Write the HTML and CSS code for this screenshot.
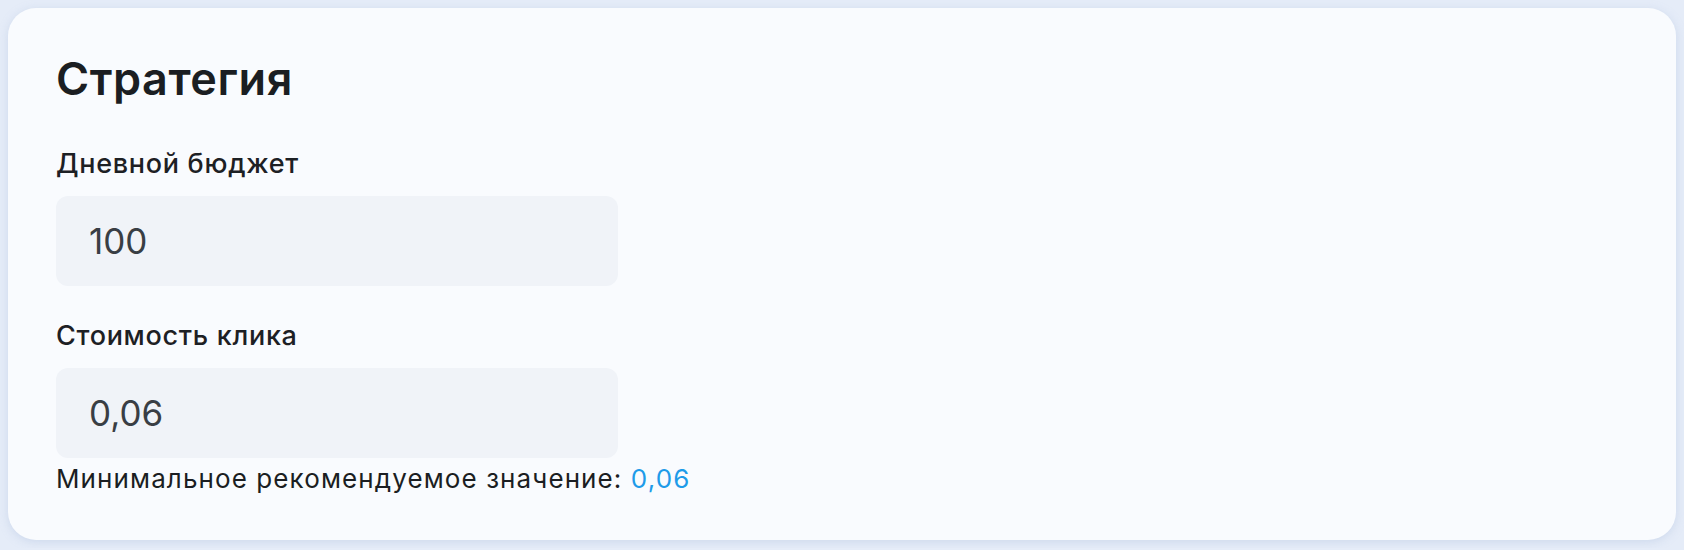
FILE: index.html
```html
<!DOCTYPE html>
<html lang="ru">
<head>
<meta charset="utf-8">
<title>Стратегия</title>
<link rel="stylesheet" href="styles.css">
</head>
<body>
<section class="card">
  <h1 class="title">Стратегия</h1>
  <div class="field">
    <label class="label" for="budget">Дневной бюджет</label>
    <input class="input" id="budget" type="text" value="100">
  </div>
  <div class="field">
    <label class="label" for="cpc">Стоимость клика</label>
    <input class="input" id="cpc" type="text" value="0,06">
    <p class="hint">Минимальное рекомендуемое значение: <span class="hint-value">0,06</span></p>
  </div>
</section>
</body>
</html>
```
FILE: styles.css
```css
* { box-sizing: border-box; }
html, body { margin: 0; }
body {
  background: #e5ecf8;
  padding: 8px;
  font-family: Inter, "Noto Sans", sans-serif;
  color: #1b1e22;
}
.card {
  background: #f9fbfe;
  border-radius: 28px;
  box-shadow: 0 2px 10px rgba(160, 180, 215, 0.35);
  padding: 44px 48px 0;
  height: 532px;
  display: flex;
  flex-direction: column;
}
.title {
  margin: 0 0 40px;
  font-size: 45px;
  line-height: 54px;
  font-weight: 600;
  letter-spacing: 0.55px;
}
.field {
  display: flex;
  flex-direction: column;
  align-items: flex-start;
}
.field + .field { margin-top: 32px; }
.label {
  font-size: 27px;
  line-height: 36px;
  font-weight: 500;
  letter-spacing: 0.7px;
  margin-bottom: 14px;
  color: #1d2024;
}
.input {
  width: 562px;
  height: 90px;
  border: none;
  outline: none;
  border-radius: 12px;
  background: #f0f3f8;
  padding: 0 33px;
  font-family: inherit;
  font-size: 35px;
  color: #393e44;
}
.hint {
  margin: 4px 0 0;
  font-size: 26px;
  line-height: 34px;
  letter-spacing: 1.1px;
  color: #1b1e22;
}
.hint-value { color: #1e9be9; }
```
